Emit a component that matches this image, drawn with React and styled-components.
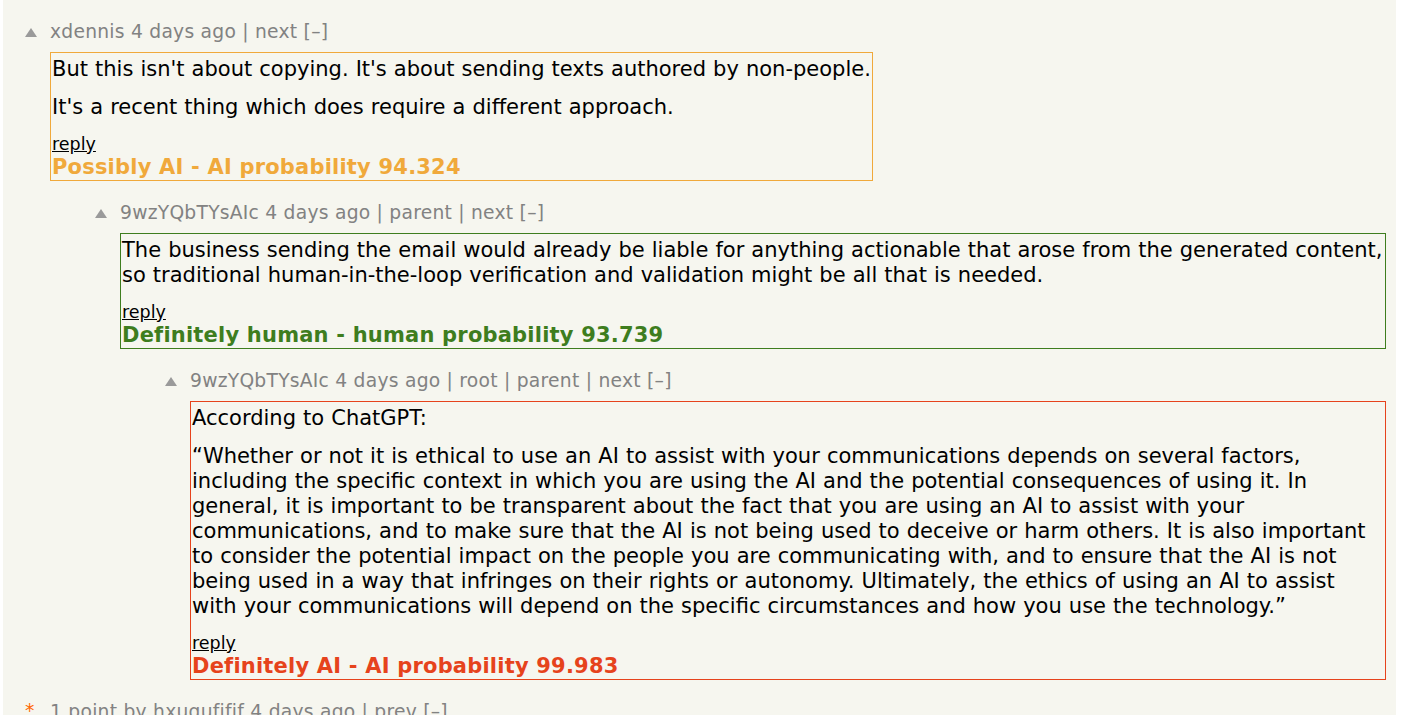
import React from "react";
import styled, { createGlobalStyle } from "styled-components";

const Global = createGlobalStyle`
  html, body { margin: 0; padding: 0; background: #ffffff; }
  body { font-family: "DejaVu Sans", Verdana, sans-serif; }
`;

const Page = styled.div`
  margin-left: 3px;
  width: 1393px;
  min-height: 715px;
  background: #f6f6ef;
  padding: 20px 10px 0 22px;
  box-sizing: border-box;
  overflow: hidden;
`;

const Comment = styled.div`
  display: grid;
  grid-template-columns: 25px 1fr;
  padding-left: ${(p) => p.$level * 70}px;
  margin-bottom: ${(p) => p.$gap ?? 20}px;
`;

const VoteCell = styled.div`
  display: flex;
  align-items: flex-start;
  padding-top: 8px;
`;

const Arrow = styled.span`
  width: 0;
  height: 0;
  border-left: 6px solid transparent;
  border-right: 6px solid transparent;
  border-bottom: 9px solid #9a9a9a;
`;

const Star = styled.span`
  color: #ff6600;
  font-size: 18.7px;
  line-height: 23px;
  margin-top: -9px;
`;

const Body = styled.div`
  display: flex;
  flex-direction: column;
  align-items: flex-start;
  min-width: 0;
`;

const Meta = styled.div`
  color: #828282;
  font-size: 18.7px;
  line-height: 23px;
  letter-spacing: 0.25px;
  margin-bottom: 9px;
`;

const Box = styled.div`
  border: 1px solid ${(p) => p.$color};
  padding: 4px 1px 0 1px;
  box-sizing: border-box;
  max-width: 100%;
`;

const Text = styled.div`
  color: #000;
  font-size: 21px;
  line-height: 25px;
  word-spacing: 0.4px;
`;

const Para = styled.p`
  margin: 13px 0 0 0;
`;

const Reply = styled.a`
  display: block;
  color: #000;
  text-decoration: underline;
  font-size: 17.5px;
  line-height: 21px;
  margin-top: 14px;
  cursor: pointer;
`;

const Verdict = styled.div`
  color: ${(p) => p.$color};
  font-weight: bold;
  font-size: 21px;
  line-height: 25px;
  letter-spacing: 0.2px;
`;

const ORANGE = "#f0a93b";
const GREEN = "#3e7d1e";
const RED = "#e6431c";

const comments = [
  {
    level: 0,
    meta: "xdennis 4 days ago | next [\u2013]",
    color: ORANGE,
    paras: [
      "But this isn't about copying. It's about sending texts authored by non-people.",
      "It's a recent thing which does require a different approach.",
    ],
    verdict: "Possibly AI - AI probability 94.324",
  },
  {
    level: 1,
    meta: "9wzYQbTYsAIc 4 days ago | parent | next [\u2013]",
    color: GREEN,
    paras: [
      "The business sending the email would already be liable for anything actionable that arose from the generated content, so traditional human-in-the-loop verification and validation might be all that is needed.",
    ],
    verdict: "Definitely human - human probability 93.739",
  },
  {
    level: 2,
    meta: "9wzYQbTYsAIc 4 days ago | root | parent | next [\u2013]",
    color: RED,
    paras: [
      "According to ChatGPT:",
      "\u201cWhether or not it is ethical to use an AI to assist with your communications depends on several factors, including the specific context in which you are using the AI and the potential consequences of using it. In general, it is important to be transparent about the fact that you are using an AI to assist with your communications, and to make sure that the AI is not being used to deceive or harm others. It is also important to consider the potential impact on the people you are communicating with, and to ensure that the AI is not being used in a way that infringes on their rights or autonomy. Ultimately, the ethics of using an AI to assist with your communications will depend on the specific circumstances and how you use the technology.\u201d",
    ],
    verdict: "Definitely AI - AI probability 99.983",
  },
];

export default function App() {
  return (
    <>
      <Global />
      <Page>
        {comments.map((c, i) => (
          <Comment key={i} $level={c.level}>
            <VoteCell>
              <Arrow />
            </VoteCell>
            <Body>
              <Meta>{c.meta}</Meta>
              <Box $color={c.color}>
                <Text>
                  {c.paras[0]}
                  {c.paras.slice(1).map((p, j) => (
                    <Para key={j}>{p}</Para>
                  ))}
                </Text>
                <Reply>reply</Reply>
                <Verdict $color={c.color}>{c.verdict}</Verdict>
              </Box>
            </Body>
          </Comment>
        ))}
        <Comment $level={0} $gap={0}>
          <VoteCell>
            <Star>*</Star>
          </VoteCell>
          <Body>
            <Meta>{"1 point by hxuqufifif 4 days ago | prev [\u2013]"}</Meta>
          </Body>
        </Comment>
      </Page>
    </>
  );
}
